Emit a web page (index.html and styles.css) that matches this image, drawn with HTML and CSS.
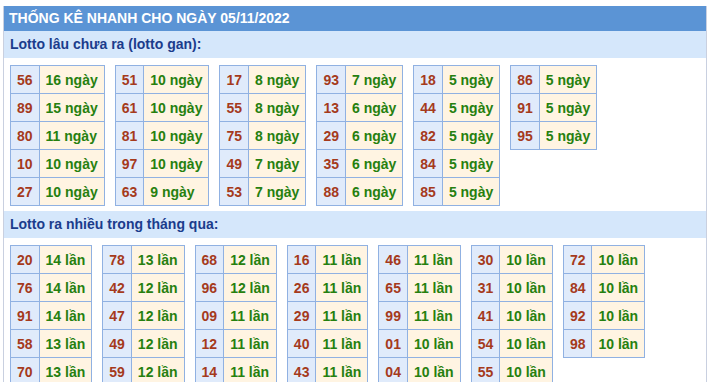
FILE: index.html
```html
<!DOCTYPE html>
<html>
<head>
<meta charset="utf-8">
<link rel="stylesheet" href="styles.css">
</head>
<body>
<div class="box">
  <div class="head">THỐNG KÊ NHANH CHO NGÀY 05/11/2022</div>
  <div class="sub">Lotto lâu chưa ra (lotto gan):</div>
  <div class="group">
    <table class="t"><tr><td class="n">56</td><td class="v">16 ngày</td></tr><tr><td class="n">89</td><td class="v">15 ngày</td></tr><tr><td class="n">80</td><td class="v">11 ngày</td></tr><tr><td class="n">10</td><td class="v">10 ngày</td></tr><tr><td class="n">27</td><td class="v">10 ngày</td></tr></table>
    <table class="t"><tr><td class="n">51</td><td class="v">10 ngày</td></tr><tr><td class="n">61</td><td class="v">10 ngày</td></tr><tr><td class="n">81</td><td class="v">10 ngày</td></tr><tr><td class="n">97</td><td class="v">10 ngày</td></tr><tr><td class="n">63</td><td class="v">9 ngày</td></tr></table>
    <table class="t"><tr><td class="n">17</td><td class="v">8 ngày</td></tr><tr><td class="n">55</td><td class="v">8 ngày</td></tr><tr><td class="n">75</td><td class="v">8 ngày</td></tr><tr><td class="n">49</td><td class="v">7 ngày</td></tr><tr><td class="n">53</td><td class="v">7 ngày</td></tr></table>
    <table class="t"><tr><td class="n">93</td><td class="v">7 ngày</td></tr><tr><td class="n">13</td><td class="v">6 ngày</td></tr><tr><td class="n">29</td><td class="v">6 ngày</td></tr><tr><td class="n">35</td><td class="v">6 ngày</td></tr><tr><td class="n">88</td><td class="v">6 ngày</td></tr></table>
    <table class="t"><tr><td class="n">18</td><td class="v">5 ngày</td></tr><tr><td class="n">44</td><td class="v">5 ngày</td></tr><tr><td class="n">82</td><td class="v">5 ngày</td></tr><tr><td class="n">84</td><td class="v">5 ngày</td></tr><tr><td class="n">85</td><td class="v">5 ngày</td></tr></table>
    <table class="t"><tr><td class="n">86</td><td class="v">5 ngày</td></tr><tr><td class="n">91</td><td class="v">5 ngày</td></tr><tr><td class="n">95</td><td class="v">5 ngày</td></tr></table>
  </div>
  <div class="sub">Lotto ra nhiều trong tháng qua:</div>
  <div class="group">
    <table class="t"><tr><td class="n">20</td><td class="v">14 lần</td></tr><tr><td class="n">76</td><td class="v">14 lần</td></tr><tr><td class="n">91</td><td class="v">14 lần</td></tr><tr><td class="n">58</td><td class="v">13 lần</td></tr><tr><td class="n">70</td><td class="v">13 lần</td></tr></table>
    <table class="t"><tr><td class="n">78</td><td class="v">13 lần</td></tr><tr><td class="n">42</td><td class="v">12 lần</td></tr><tr><td class="n">47</td><td class="v">12 lần</td></tr><tr><td class="n">49</td><td class="v">12 lần</td></tr><tr><td class="n">59</td><td class="v">12 lần</td></tr></table>
    <table class="t"><tr><td class="n">68</td><td class="v">12 lần</td></tr><tr><td class="n">96</td><td class="v">12 lần</td></tr><tr><td class="n">09</td><td class="v">11 lần</td></tr><tr><td class="n">12</td><td class="v">11 lần</td></tr><tr><td class="n">14</td><td class="v">11 lần</td></tr></table>
    <table class="t"><tr><td class="n">16</td><td class="v">11 lần</td></tr><tr><td class="n">26</td><td class="v">11 lần</td></tr><tr><td class="n">29</td><td class="v">11 lần</td></tr><tr><td class="n">40</td><td class="v">11 lần</td></tr><tr><td class="n">43</td><td class="v">11 lần</td></tr></table>
    <table class="t"><tr><td class="n">46</td><td class="v">11 lần</td></tr><tr><td class="n">65</td><td class="v">11 lần</td></tr><tr><td class="n">99</td><td class="v">11 lần</td></tr><tr><td class="n">01</td><td class="v">10 lần</td></tr><tr><td class="n">04</td><td class="v">10 lần</td></tr></table>
    <table class="t"><tr><td class="n">30</td><td class="v">10 lần</td></tr><tr><td class="n">31</td><td class="v">10 lần</td></tr><tr><td class="n">41</td><td class="v">10 lần</td></tr><tr><td class="n">54</td><td class="v">10 lần</td></tr><tr><td class="n">55</td><td class="v">10 lần</td></tr></table>
    <table class="t"><tr><td class="n">72</td><td class="v">10 lần</td></tr><tr><td class="n">84</td><td class="v">10 lần</td></tr><tr><td class="n">92</td><td class="v">10 lần</td></tr><tr><td class="n">98</td><td class="v">10 lần</td></tr></table>
  </div>
</div>
</body>
</html>
```

FILE: styles.css
```css
html, body {
  margin: 0;
  padding: 0;
  background: #ffffff;
}
body {
  font-family: "Liberation Sans", Arial, sans-serif;
  font-size: 14px;
  font-weight: bold;
}
.box {
  margin: 6px 0 0 3px;
  width: 702px;
  border-left: 1px solid #c9d0e0;
  border-right: 1px solid #c9d0e0;
}
.head {
  background: #5b94d5;
  color: #ffffff;
  height: 25px;
  line-height: 25px;
  padding-left: 5px;
}
.sub {
  background: #d5e7fb;
  color: #1b3c8c;
  height: 27px;
  line-height: 27px;
  padding-left: 6px;
}
.group {
  display: flex;
  flex-wrap: wrap;
  align-items: flex-start;
  gap: 10px;
  padding: 7px 0 5px 6px;
}
.t {
  border-collapse: collapse;
}
.t td {
  border: 1px solid #90b1e2;
  height: 27px;
  padding: 0 6px;
  white-space: nowrap;
}
.t .n {
  background: #e0ebfb;
  color: #a53a1c;
  text-align: center;
}
.t .v {
  background: #fff4e2;
  color: #26800f;
}
```
